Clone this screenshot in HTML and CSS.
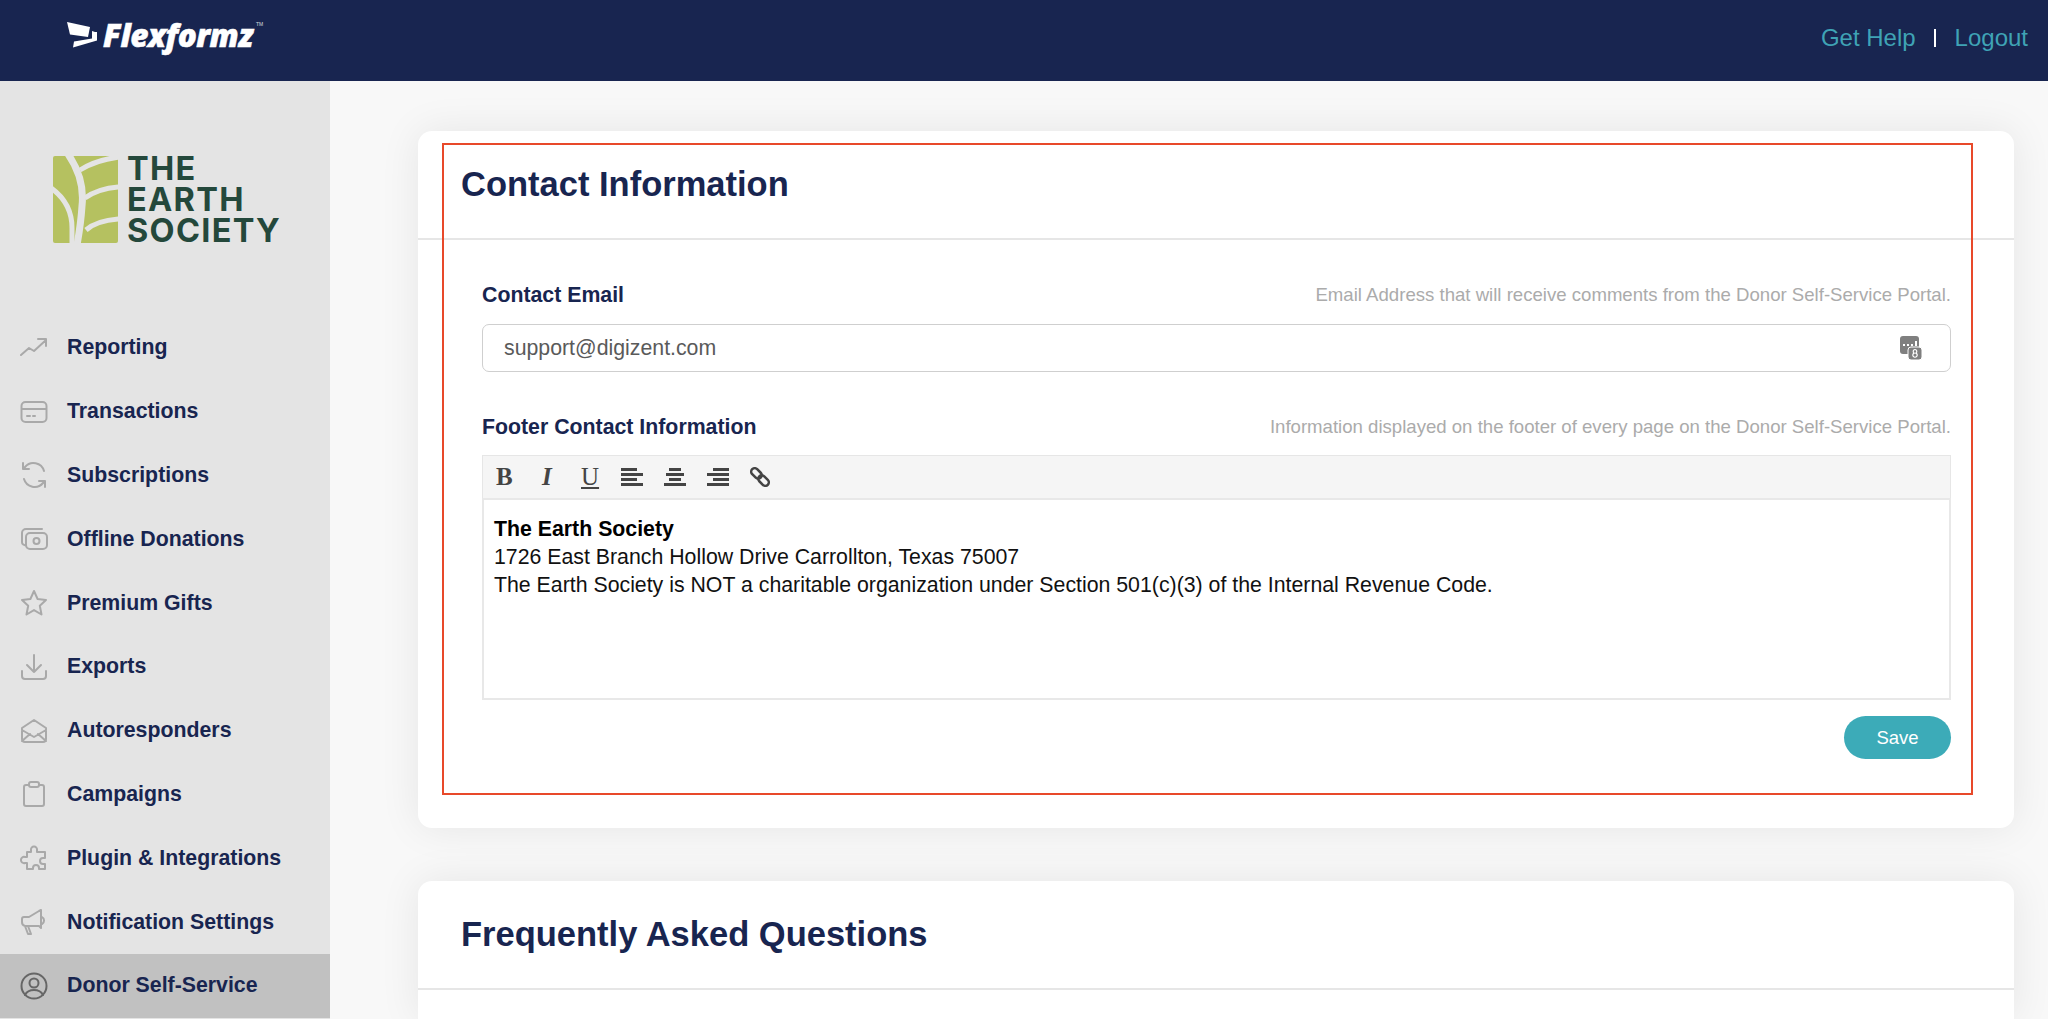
FILE: index.html
```html
<!DOCTYPE html>
<html lang="en">
<head>
<meta charset="utf-8">
<title>Donor Self-Service</title>
<link rel="stylesheet" href="styles.css">
</head>
<body>
<header class="topbar">
  <div class="brand">
    <svg class="brand-mark" viewBox="0 0 32 26"><path d="M1 0l23 5-2 10-18-2.500z"/><path d="M26 9l3 1h2v8.500l-24 7 1-6 18-3z"/></svg>
    <span class="brand-name">Flexformz</span><span class="brand-tm">TM</span>
  </div>
  <nav class="toplinks"><a>Get Help</a><span class="sep"></span><a>Logout</a></nav>
</header>
<div class="shell">
  <aside class="sidebar">
    <div class="org">
      <svg class="org-mark" viewBox="0 0 65 87">
        <rect width="65" height="87" rx="2" fill="#b5c160"/>
        <g fill="none" stroke="#e4e4e4" stroke-width="5">
          <path d="M15-2C26 14 31 32 29 50 28 66 26 78 24 89" stroke-width="7"/>
          <path d="M-2 32C12 42 19 56 19 72V89"/>
          <path d="M27 14C38 7 50 3 66 1"/>
          <path d="M32 42C42 35 52 32 66 31"/>
          <path d="M33 74C41 67 52 64 66 63"/>
        </g>
      </svg>
      <div class="org-name">THE<br>EARTH<br>SOCIETY</div>
    </div>
    <ul class="nav">
      <li class="nav-item"><svg viewBox="0 0 28 28"><path d="M1 21l8-7 5 3L26 6M18 5h8v7"/></svg>Reporting</li>
      <li class="nav-item"><svg viewBox="0 0 28 28"><rect x="1.500" y="4" width="25" height="20" rx="4"/><path d="M2 11h24M7 18h3M13 18h2" /></svg>Transactions</li>
      <li class="nav-item"><svg viewBox="0 0 28 28"><path d="M24 10A11 11 0 0 0 5 6L3 8M3 2v6h6M4 18a11 11 0 0 0 19 4l2-2M25 26v-6h-6"/></svg>Subscriptions</li>
      <li class="nav-item"><svg viewBox="0 0 28 28"><rect x="6" y="8" width="21" height="16" rx="4"/><path d="M22 4H6a4 4 0 0 0-4 4v9a3 3 0 0 0 4 3"/><circle cx="16.500" cy="16" r="3"/></svg>Offline Donations</li>
      <li class="nav-item"><svg viewBox="0 0 28 28"><path d="M14 2l3.600 8 8.400 1-6.200 5.800 1.700 8.700-7.500-4.400-7.500 4.400 1.700-8.700L2 11l8.400-1z"/></svg>Premium Gifts</li>
      <li class="nav-item"><svg viewBox="0 0 28 28"><path d="M14 2v17M7 12l7 7 7-7M2 18v5a3 3 0 0 0 3 3h18a3 3 0 0 0 3-3v-5"/></svg>Exports</li>
      <li class="nav-item"><svg viewBox="0 0 28 28"><path d="M2 11L14 3l12 8v11a3 3 0 0 1-3 3H5a3 3 0 0 1-3-3zM2 13l12 7 12-7M2 24l8-7M26 24l-8-7"/></svg>Autoresponders</li>
      <li class="nav-item"><svg viewBox="0 0 28 28"><path d="M9 5H6a2 2 0 0 0-2 2v17a2 2 0 0 0 2 2h16a2 2 0 0 0 2-2V7a2 2 0 0 0-2-2h-3"/><rect x="9" y="2" width="10" height="5" rx="2"/></svg>Campaigns</li>
      <li class="nav-item"><svg viewBox="0 0 28 28"><path d="M14 2.500a3 3 0 0 1 3 3.500v2h8v6h-2a3 3 0 0 0 0 6h2v5h-6v-1a3 3 0 0 0-6 0v1H7v-6H5a3 3 0 0 1-4-3 3 3 0 0 1 4-3h2V8h4V6a3 3 0 0 1 3-3.500z"/></svg>Plugin &amp; Integrations</li>
      <li class="nav-item"><svg viewBox="0 0 28 28"><path d="M19 3L9 9H4a2 2 0 0 0-2 2v3a4 4 0 0 0 3 4h14l2 2V2zM22 9a4 4 0 0 1 0 7M8 18l3 8h-3l-3-8"/></svg>Notification Settings</li>
      <li class="nav-item active"><svg viewBox="0 0 28 28"><circle cx="14" cy="14" r="12.500"/><circle cx="14" cy="11" r="4.500"/><path d="M5 23c2-4 5-5 9-5s7 1 9 5"/></svg>Donor Self-Service</li>
    </ul>
  </aside>
  <main class="content">
    <section class="card">
      <h2 class="card-title">Contact Information</h2>
      <div class="card-body">
        <div class="field-head"><label class="field-label">Contact Email</label><span class="field-hint">Email Address that will receive comments from the Donor Self-Service Portal.</span></div>
        <div class="input"><span>support@digizent.com</span>
          <svg class="input-icon" viewBox="0 0 22 24"><rect x="0" y="0" width="19" height="18" rx="3" fill="#7f7f7f"/><rect x="8" y="11" width="14" height="13" rx="3" fill="#7f7f7f" stroke="#fff"/><path d="M3 8h2v2H3zM7 8h2v2H7zM11 8h2v2h-2zM15 5h2v5h-2z" fill="#fff"/><path d="M15 13.500a2 2 0 0 0-1 3.600 2.200 2.200 0 1 0 2 0 2 2 0 0 0-1-3.600z" fill="none" stroke="#fff" stroke-width="1.200"/></svg>
        </div>
        <div class="field-head second"><label class="field-label">Footer Contact Information</label><span class="field-hint">Information displayed on the footer of every page on the Donor Self-Service Portal.</span></div>
        <div class="toolbar">
          <span class="tool bold">B</span>
          <span class="tool italic">I</span>
          <span class="tool under">U</span>
          <svg class="tool-icon" viewBox="0 0 22 18"><path d="M0 1.500h16M0 6.500h22M0 11.500h16M0 16.500h22"/></svg>
          <svg class="tool-icon" viewBox="0 0 22 18"><path d="M5 1.500h12M2 6.500h18M5 11.500h12M0 16.500h22"/></svg>
          <svg class="tool-icon" viewBox="0 0 22 18"><path d="M6 1.500h16M0 6.500h22M6 11.500h16M0 16.500h22"/></svg>
          <svg class="tool-icon link" viewBox="0 0 20 20"><g transform="rotate(45 10 10)"><rect x="-1" y="6.500" width="12" height="7" rx="3.500"/><rect x="9" y="6.500" width="12" height="7" rx="3.500"/></g></svg>
        </div>
        <div class="editor">
          <strong>The Earth Society</strong><br>
          1726 East Branch Hollow Drive Carrollton, Texas 75007<br>
          The Earth Society is NOT a charitable organization under Section 501(c)(3) of the Internal Revenue Code.
        </div>
        <div class="actions"><button class="save">Save</button></div>
      </div>
      <div class="annotation"></div>
    </section>
    <section class="card card-tall">
      <h2 class="card-title">Frequently Asked Questions</h2>
    </section>
  </main>
</div>
</body>
</html>
```
FILE: styles.css
```css
* { box-sizing: border-box; }
html, body { margin: 0; height: 1019px; overflow: hidden; }
body { font-family: "Liberation Sans", Arial, sans-serif; background: #f8f8f8; display: flex; flex-direction: column; }

.topbar { flex: 0 0 81px; background: #182550; display: flex; align-items: center; justify-content: space-between; padding: 0 20px 5px 66px; }
.brand { display: flex; align-items: center; color: #fff; margin-bottom: 7px; }
.brand-mark { width: 32px; height: 26px; fill: #fff; margin-right: 5px; }
.brand-name { font-family: "Open Sans", sans-serif; font-weight: 800; font-style: italic; font-size: 31.500px; letter-spacing: -0.5px; line-height: 32px; -webkit-text-stroke: 0.5px #fff; }
.brand-tm { font-size: 5px; align-self: flex-start; margin: 2px 0 0 3px; opacity: .8; }
.toplinks { display: flex; align-items: center; font-size: 24px; color: #3fa3b5; }
.sep { width: 2px; height: 18px; background: #fff; margin: 0 19px 0 18px; }

.shell { flex: 1; display: flex; min-height: 0; }
.sidebar { flex: 0 0 330px; background: #e4e4e4; display: flex; flex-direction: column; }
.org { flex: none; height: 235px; padding: 75px 0 0 53px; display: flex; align-items: flex-start; }
.org-mark { width: 65px; height: 87px; flex: none; }
.org-name { margin: -3px 0 0 9px; font-family: "Inter", sans-serif; font-weight: 700; font-size: 32.500px; letter-spacing: 1.300px; line-height: 31px; color: #24483b; }
.nav { list-style: none; margin: 0; padding: 0; }
.nav-item { height: 63.800px; display: flex; align-items: center; padding-left: 20px; gap: 19px; font-size: 21.300px; font-weight: 700; color: #182550; }
.nav-item svg { width: 28px; height: 28px; flex: none; fill: none; stroke: #a9a9a9; stroke-width: 2; stroke-linejoin: round; stroke-linecap: round; }
.nav-item.active { background: #c1c1c1; }
.nav-item.active svg { stroke: #666; }

.content { flex: 1; min-width: 0; padding: 50px 34px 0 88px; display: flex; flex-direction: column; gap: 53px; }
.card { position: relative; flex: none; background: #fff; border-radius: 14px; box-shadow: 0 0 40px rgba(0, 0, 0, .08); }
.card-tall { flex: 1; border-radius: 14px 14px 0 0; }
.card-title { margin: 0; height: 109px; padding: 32px 0 0 43px; font-size: 34.500px; line-height: 42px; font-weight: 700; color: #182550; border-bottom: 2px solid #e6e6e6; }
.card-body { padding: 43px 63px 69px 64px; }
.field-head { display: flex; justify-content: space-between; align-items: center; height: 24px; margin-bottom: 17px; }
.field-head.second { margin: 43px 0 16px; }
.field-label { font-size: 21.300px; font-weight: 700; color: #182550; }
.field-hint { font-size: 18.600px; color: #ababab; }
.input { height: 48px; border: 1px solid #cfcfcf; border-radius: 7px; padding: 0 19px 0 21px; display: flex; align-items: center; justify-content: space-between; font-size: 21.300px; color: #5a5a5a; }
.input-icon { width: 22px; height: 24px; margin-right: 9px; }
.toolbar { height: 43px; background: #f5f5f5; border: 1px solid #e6e6e6; border-bottom: 0; display: flex; align-items: center; padding-left: 13px; color: #444; }
.tool { font-family: "Liberation Serif", serif; font-size: 25px; line-height: 28px; width: 43px; color: #444; }
.bold { font-weight: 700; }
.italic { font-style: italic; font-weight: 700; width: 42px; padding-left: 3px; }
.under { text-decoration: underline; text-decoration-thickness: 2px; text-underline-offset: 2px; width: 40px; padding-left: 0; }
.tool-icon { width: 22px; height: 18px; margin-right: 21px; fill: none; stroke: #444; stroke-width: 3; }
.tool-icon.link { width: 20px; height: 20px; stroke-width: 2.500; }
.editor { height: 202px; border: 2px solid #e8e8e8; padding: 15px 10px 0; font-size: 21.300px; line-height: 28px; color: #111; }
.editor strong { color: #000; }
.actions { display: flex; justify-content: flex-end; margin-top: 16px; }
.save { width: 107px; height: 43px; border: 0; border-radius: 22px; background: #3cabb8; color: #fff; font: 18.500px "Liberation Sans", Arial, sans-serif; }
.annotation { position: absolute; left: 24px; top: 12px; width: 1531px; height: 652px; border: 2px solid #e8492a; pointer-events: none; }
```
